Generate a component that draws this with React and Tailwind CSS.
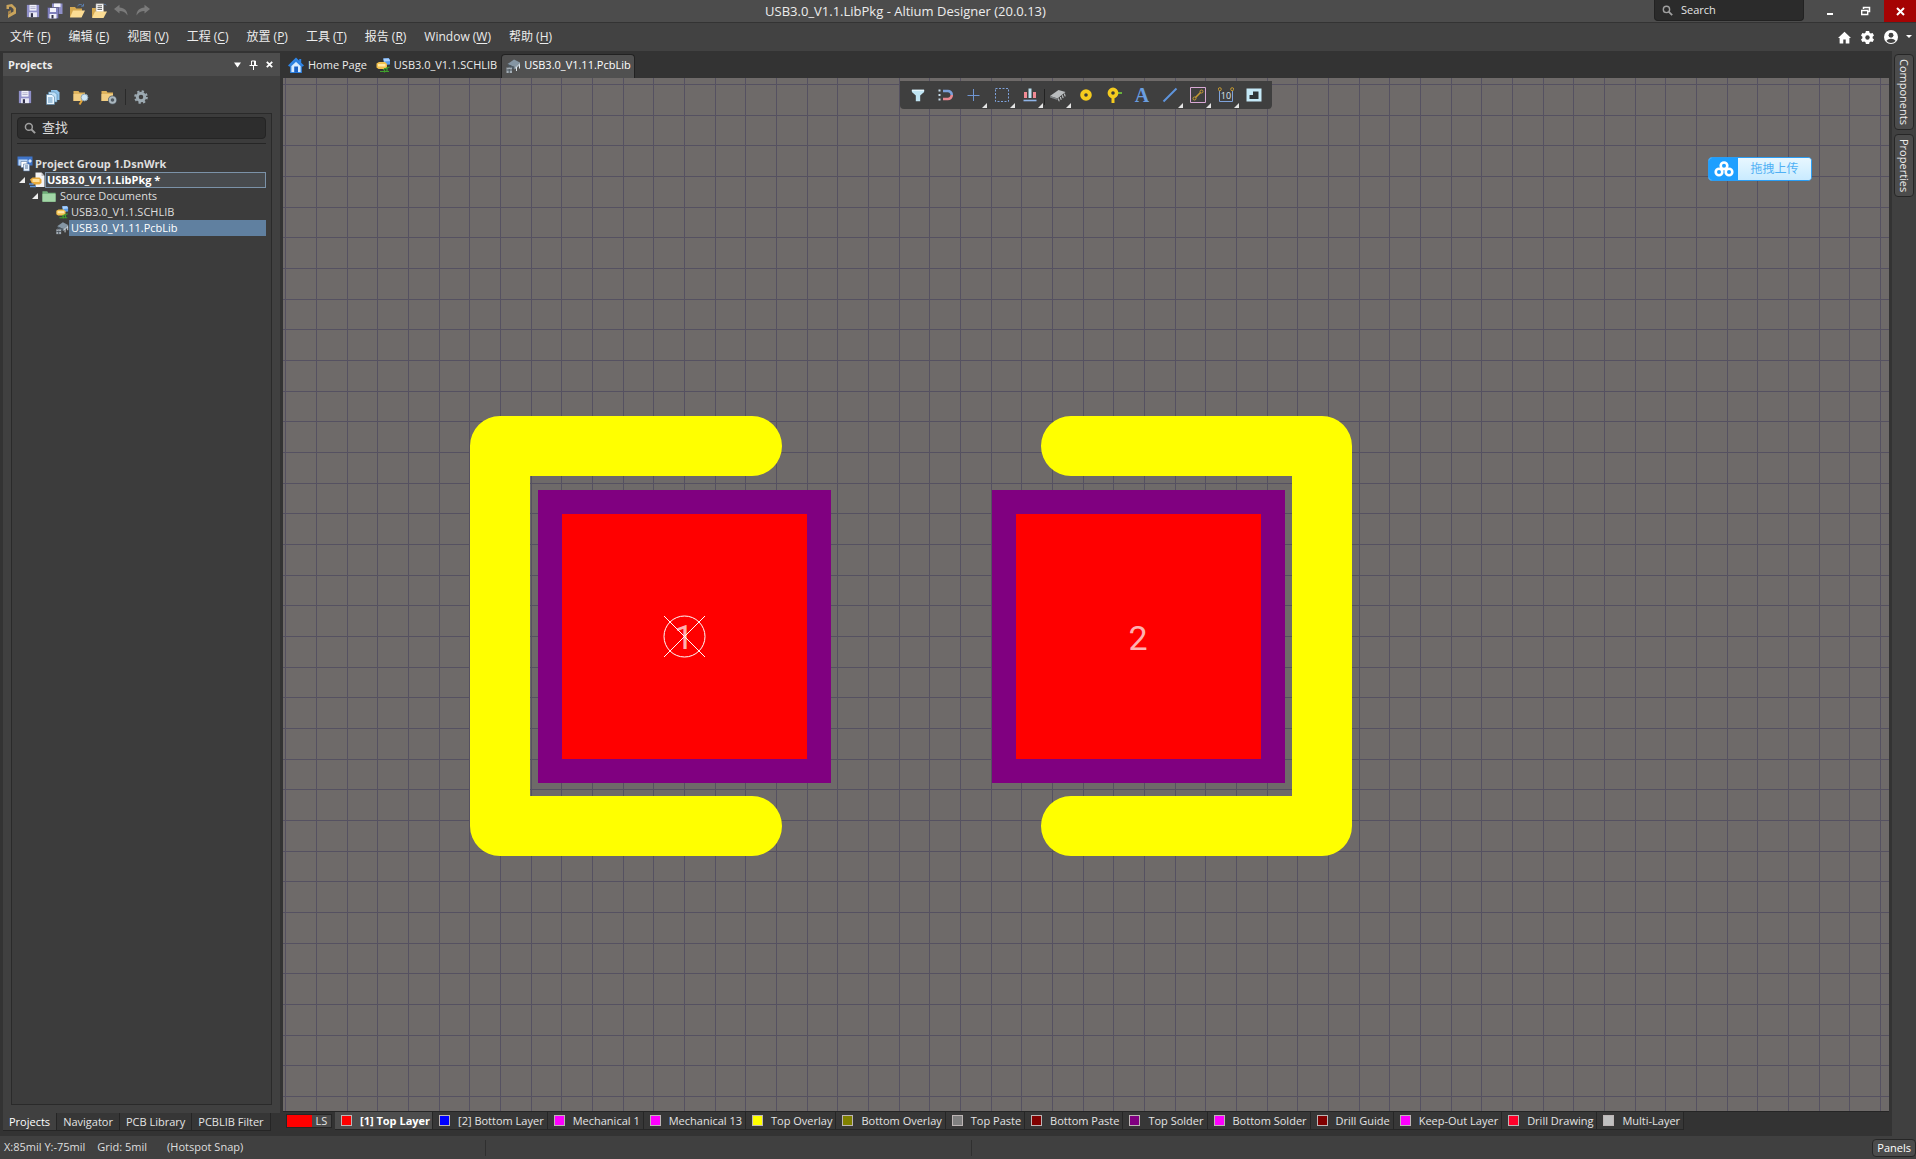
import React from "react";

const FONT = "font-['Open_Sans','Noto_Sans_CJK_SC',sans-serif]";

const Svg = ({ s = 16, children, className = "" }) => (
  <svg width={s} height={s} viewBox="0 0 16 16" fill="none" className={"shrink-0 " + className} aria-hidden="true">
    {children}
  </svg>
);

/* ---------- icons ---------- */
const Logo = () => (
  <Svg>
    <path d="M3.500 2 9 1 13 5v5.500L5 15v-3.500L10.500 8.500V6L8 3.800H6V6H3.500z" fill="#c9a45c" />
    <path d="M5 8.500 8 7v2.800L5 11.500Z" fill="#a8854a" />
  </Svg>
);
const Save = ({ s = 16 }) => (
  <Svg s={s}>
    <path d="M1 1h14v14H1z" fill="#8f8fc8" />
    <path d="M4 1h8v6.500H4z" fill="#f2f2fa" />
    <path d="M5 3.200h6M5 5.200h6" stroke="#a8a8c8" />
    <path d="M3.500 9.500h9V15h-9z" fill="#e9e9f5" />
    <path d="M5.500 10.500H8V15H5.500z" fill="#33334d" />
  </Svg>
);
const SaveAll = () => (
  <Svg>
    <path d="M5 .5h10.500V11H5z" fill="#8f8fc8" />
    <path d="M7 .5h6.500V4H7z" fill="#f2f2fa" />
    <path d="M.5 4.500h11v11H.5z" fill="#8080bd" stroke="#44445c" strokeWidth=".5" />
    <path d="M3 5h6v4H3zM2.500 11h7v4.500h-7z" fill="#f2f2fa" />
    <path d="M4.500 12h2v3.500h-2z" fill="#33334d" />
  </Svg>
);
const Open = () => (
  <Svg>
    <path d="M1 4h5l1.200 1.600H13V14H1z" fill="#d6a950" />
    <path d="M4 7.500h12L12.500 14.500H1z" fill="#fbdc94" />
    <path d="M8.500 3c1.500-2 4-2 5.200-.3M14.500.8v2.400h-2.400" stroke="#5b7fae" />
  </Svg>
);
const OpenDoc = () => (
  <Svg>
    <path d="M1 5h4l1 1.500h7V14H1z" fill="#d6a950" />
    <path d="M5 .8h7.500V9H5z" fill="#fff" stroke="#9a9a9a" strokeWidth=".6" />
    <path d="M6.500 2.800h4.500M6.500 4.600h4.500M6.500 6.400h4.500" stroke="#4d4d4d" strokeWidth=".9" />
    <path d="M4 8.500h12L12.500 15H1z" fill="#fbdc94" />
    <path d="M13 1.500c1-.4 1.800 0 2.200.8" stroke="#5b7fae" />
  </Svg>
);
const Undo = ({ flip }) => (
  <Svg className={flip ? "-scale-x-100" : ""}>
    <path d="M1 6 6.500 1.800V4.500C11.500 4.600 14.500 8 14.500 12.500 12.600 9.400 10 8 6.500 8v2.600Z" fill="#7a7a7a" />
  </Svg>
);
const Mag = ({ s = 13, c = "#a0a0a0" }) => (
  <Svg s={s}>
    <circle cx="6.500" cy="6.500" r="4.600" stroke={c} strokeWidth="2" />
    <path d="m10 10 4.800 4.800" stroke={c} strokeWidth="2.600" />
  </Svg>
);
const House = () => (
  <Svg>
    <path d="M8 .5 0 8.600l1.400 1.200L8 3.600l6.600 6.200L16 8.600 13.200 5.700V2h-2v1.700Z" fill="#2f86e8" />
    <path d="M2.800 8.800 8 4l5.200 4.800v6.700H2.800z" fill="#d9ecff" stroke="#2f86e8" strokeWidth="1.200" />
    <path d="M6.200 9.500h3.800v6H6.200z" fill="#1c62c4" />
  </Svg>
);
const SchLib = () => (
  <Svg>
    <path d="M8 1.500 13.500 1 15 3v4.500L9.500 8z" fill="#5a9be8" />
    <path d="M8.500 1.500h5.500L15 4l-6 .5z" fill="#a8d0ff" />
    <path d="M1.500 6.500 4 5h6l2 2v3.500L9 12H3.500l-2-1.500z" fill="#f2c14e" />
    <path d="M3 7h7.500v2.500H3z" fill="#ffe9a8" />
    <path d="M8 12.500 14.500 10M5 14.500h9M9.500 11v4.500M12 10.500V15" stroke="#3fa02c" strokeWidth="1.200" />
  </Svg>
);
const PcbLib = () => (
  <Svg>
    <path d="M2.500 6 9 1.500l6 3L9.500 9z" fill="#8596a4" />
    <path d="M2.500 6 9.500 9v2.500L5 9.800z" fill="#4f5d68" />
    <path d="m9.500 9 5.500-4.500v2.700L9.500 11.500z" fill="#a9b7c2" />
    <path d="M11.500 9v4M14.500 6.500v4" stroke="#dbe4ea" />
    <path d="M1.500 9.500H7V15H1.500z" fill="#a3adb5" />
    <path d="M2.800 9.500V8h3v1.500M4.200 11v4M1.500 12H7" stroke="#4a545c" />
  </Svg>
);
const Copies = () => (
  <Svg>
    <path d="M6 1h6l2.500 2.500V11H6z" fill="#8fc3ea" />
    <path d="M3.500 3h6L12 5.500V13H3.500z" fill="#bfe0f7" stroke="#4c7da3" strokeWidth=".6" />
    <path d="M1.500 5.500H7L9.500 8v7.500h-8z" fill="#eaf6ff" stroke="#4c7da3" strokeWidth=".6" />
    <path d="M3 9h4.500M3 11h4.500M3 13h4.500" stroke="#5c94bf" />
  </Svg>
);
const Gear = ({ s = 16, c = "#9daab2", hole = "#404040" }) => (
  <Svg s={s}>
    <circle cx="8" cy="8" r="6.600" stroke={c} strokeWidth="2.400" strokeDasharray="2.600 2.580" />
    <circle cx="8" cy="8" r="5.900" fill={c} />
    <circle cx="8" cy="8" r="2.600" fill={hole} />
  </Svg>
);
/* six-toothed gear for the menu bar */
const Cog = () => (
  <Svg s={13}>
    <path d="M6 0h4l.5 2.300 1.500.9 2.300-.8 1.700 3-1.700 1.700v1.800l1.700 1.700-1.700 3-2.300-.8-1.500.9L10 16H6l-.5-2.300-1.500-.9-2.300.8-1.700-3 1.700-1.700V7.100L0 5.400l1.700-3 2.300.8 1.500-.9z" fill="#fff" />
    <circle cx="8" cy="8" r="2.700" fill="#424242" />
  </Svg>
);
const FolderMag = () => (
  <Svg>
    <path d="M.5 2h5l1 1.500H12V12H.5z" fill="#dfb35c" />
    <path d="M.5 5H12v7H.5z" fill="#f1cd82" />
    <path d="m9 11.500-2.500 4" stroke="#e0a338" strokeWidth="2" />
    <circle cx="11.500" cy="8.500" r="3.400" fill="#cfe6f5" stroke="#8ea4b2" />
  </Svg>
);
const FolderGear = () => (
  <Svg>
    <path d="M.5 2h5l1 1.500H12V12H.5z" fill="#dfb35c" />
    <path d="M.5 5H12v7H.5z" fill="#f1cd82" />
    <circle cx="11.500" cy="11" r="3" stroke="#4f5961" strokeWidth="3" fill="#4f5961" />
    <circle cx="11.500" cy="11" r="2.800" stroke="#aab6be" strokeWidth="2" />
  </Svg>
);
const Folder = () => (
  <Svg s={14}>
    <path d="M.5 2.500H6l1 1.800h8.500v10.200H.5z" fill="#6fae78" />
    <path d="M.5 5.500h15v9H.5z" fill="#a2d6a6" />
  </Svg>
);
const Group = () => (
  <Svg>
    <path d="M.5.5h15v9H.5z" fill="#3f74c8" />
    <path d="M1.500 3.500h9v6h-9z" fill="#bcd6f5" />
    <path d="M4 5.500h6v6H4z" fill="#fff" stroke="#55749d" strokeWidth=".6" />
    <path d="M6.500 8h6v7h-6z" fill="#e8f2fc" stroke="#55749d" strokeWidth=".6" />
    <path d="M8 10h3M8 12h3" stroke="#55749d" />
    <path d="m11 5 2-2 2 2-2 2z" fill="#d8e8fa" />
  </Svg>
);
const LibPkg = () => (
  <Svg>
    <path d="M6.500.5h6l3 3.500v11h-9z" fill="#f4f4f4" />
    <path d="M12.500.5V4h3z" fill="#bdbdbd" />
    <path d="M1 7.500 3.500 5.500h7l2 2V11l-2 1.500h-7z" fill="#e9ab3c" />
    <path d="M3.500 7h7v3h-7z" fill="#ffdf96" />
    <path d="M0 12h4.500M1 14.500h6" stroke="#5d93d6" strokeWidth="1.500" />
  </Svg>
);

const TB = {
  filter: (
    <Svg s={14}><path d="M1 2h14v2.500L10.500 8.500V15h-5V8.500L1 4.500z" fill="#bfe3f2" /><path d="M1 2h14v1.500H1z" fill="#e4f5fc" /></Svg>
  ),
  magnet: (
    <Svg>
      <path d="M5 4h4.500a4 4 0 0 1 4.300 4" stroke="#7c9fd8" strokeWidth="2.600" />
      <path d="M5 12h4.500a4 4 0 0 0 4.300-4" stroke="#e88790" strokeWidth="2.600" />
      <path d="M.5 3.500h2M.5 8h2M.5 12.500h2" stroke="#c6dcea" strokeWidth="2" />
    </Svg>
  ),
  cross: (<Svg><path d="M7.500 2v12M1.500 8.500h12" stroke="#6f95d2" /></Svg>),
  select: (<Svg><path d="M1.500 1.500h13v13h-13z" stroke="#7fa3dc" strokeDasharray="2 1.500" /></Svg>),
  align: (
    <Svg>
      <path d="M3.500 5v6M12.500 5v6" stroke="#f08a94" strokeWidth="3" />
      <path d="M8 1.500V11" stroke="#bfe3f2" strokeWidth="3" />
      <path d="M1.500 13.500h13" stroke="#8fb4e8" strokeWidth="1.600" />
    </Svg>
  ),
  chip: (
    <Svg>
      <path d="M0 9 8.500 3 15.500 5 7.500 11.500z" fill="#b9bcbe" />
      <path d="M0 9v1.500L7.500 13v-1.500z" fill="#7f8386" />
      <path d="m8.500 11.500.6 2.800M10.500 10l.6 2.800M12.500 8.300l.6 2.800M14.500 6.600l.6 2.800" stroke="#d2d6d8" />
    </Svg>
  ),
  pad: (<Svg><circle cx="8" cy="8" r="3.800" stroke="#f4cb1e" strokeWidth="4" fill="#3a3a3a" /></Svg>),
  via: (
    <Svg>
      <path d="M10 6h6" stroke="#69b33c" strokeWidth="2" />
      <path d="M7 8v8" stroke="#f4cb1e" strokeWidth="3" />
      <circle cx="7" cy="6" r="3.600" stroke="#f4cb1e" strokeWidth="3.600" fill="#3a3a3a" />
    </Svg>
  ),
  line: (<Svg><path d="M1.500 14.500 14.500 1.500" stroke="#5f95dd" strokeWidth="2" /></Svg>),
  route: (
    <Svg>
      <path d="M.5.5h15v15H.5z" stroke="#d9a9d6" />
      <path d="m5.500 10.500 5-5" stroke="#c79b32" strokeWidth="1.600" />
      <circle cx="4.500" cy="11.500" r="1.500" stroke="#c79b32" /><circle cx="11.500" cy="4.500" r="1.500" stroke="#c79b32" />
    </Svg>
  ),
  dim: (
    <Svg>
      <path d="M1.500 4v10.500h13V4" stroke="#7fa3dc" />
      <circle cx="1.800" cy="2.200" r="1.500" stroke="#c79b32" /><circle cx="14.200" cy="2.200" r="1.500" stroke="#c79b32" />
      <text x="8" y="12" fontSize="9" textAnchor="middle" fill="#dce6ee">10</text>
    </Svg>
  ),
  poly: (<Svg><path d="M.5 1.500h15v13H.5z" fill="#c5e9f7" /><path d="M7 4.500h5.500v7.500h-9V8H7z" fill="#2e3438" /></Svg>),
};

const Corner = () => (
  <svg width="5" height="5" className="absolute right-px bottom-px" aria-hidden="true"><path d="M5 0v5H0z" fill="#e4e4e4" /></svg>
);

const tools = [
  ["Filter", TB.filter], ["Snapping", TB.magnet], ["Move", TB.cross, 1], ["Select", TB.select, 1], ["Align", TB.align, 1, 1],
  ["Component", TB.chip, 1], ["Pad", TB.pad], ["Via", TB.via],
  ["Text", <span className="font-['Liberation_Serif',serif] text-xl leading-4 font-bold text-[#6a9ee0]">A</span>],
  ["Line", TB.line, 1], ["Route", TB.route, 1], ["Dimension", TB.dim, 1], ["Region", TB.poly],
];

/* ---------- title and menu ---------- */
function TitleBar() {
  return (
    <header className="flex h-[22px] shrink-0 items-center bg-[#4c4c4c]">
      <div className="flex items-center gap-1.5 pr-1.5 pl-[3px]">
        <Logo />
        {[["Save", <Save s={14} />], ["Save All", <SaveAll />], ["Open", <Open />], ["Open Document", <OpenDoc />], ["Undo", <Undo />], ["Redo", <Undo flip />]].map(([n, i]) => (
          <button key={n} aria-label={n} className="flex h-4 w-4 items-center justify-center">{i}</button>
        ))}
      </div>
      <h1 className="flex-1 text-center text-[13px] leading-5 text-[#ececec]">USB3.0_V1.1.LibPkg - Altium Designer (20.0.13)</h1>
      <div className="flex h-full justify-end">
        <label className="mr-2 flex h-[21px] w-[150px] items-center gap-2 rounded-b border border-t-0 border-[#222] bg-[#2b2b2b] px-[7px]">
          <Mag s={11} />
          <input aria-label="Search" placeholder="Search" className="w-full bg-transparent text-[11px] leading-4 text-white outline-none placeholder:text-[#e4e4e4]" />
        </label>
        <button aria-label="Minimize" className="flex w-9 items-center justify-center"><span className="mt-1.5 h-0.5 w-1.5 bg-white" /></button>
        <button aria-label="Restore" className="flex w-9 items-center justify-center">
          <svg width="10" height="10" fill="none" stroke="#fff"><path d="M2.500 3V1.500h6v4H7" strokeWidth="1.500" /><path d="M.7 4.500h6v4h-6z" strokeWidth="1.400" /></svg>
        </button>
        <button aria-label="Close" className="flex w-8 items-center justify-center bg-[#a50303]">
          <svg width="9" height="9" stroke="#fff" strokeWidth="2"><path d="m1 1 7 7M8 1 1 8" /></svg>
        </button>
      </div>
    </header>
  );
}

const menus = [["文件", "F"], ["编辑", "E"], ["视图", "V"], ["工程", "C"], ["放置", "P"], ["工具", "T"], ["报告", "R"], ["Window", "W"], ["帮助", "H"]];

function MenuBar() {
  return (
    <nav className="flex h-[29px] shrink-0 items-center justify-between border-t border-[#333] bg-[#424242] pr-1 pl-2.5">
      <div className="flex gap-[18px]">
        {menus.map(([t, k]) => (
          <button key={t} className="text-xs whitespace-nowrap text-[#ececec]">{t} (<u className="underline-offset-2">{k}</u>)</button>
        ))}
      </div>
      <div className="flex items-center gap-2.5">
        <button aria-label="Home"><Svg s={13}><path d="M8 1 0 8.500h2V15.500h4.500v-5h3v5H14V8.500h2z" fill="#fff" /></Svg></button>
        <button aria-label="Settings"><Cog /></button>
        <button aria-label="Account" className="flex items-center gap-2">
          <Svg s={14}><circle cx="8" cy="8" r="8" fill="#fff" /><circle cx="8" cy="6" r="2.800" fill="#424242" /><path d="M2.800 12.500c2-3.500 8.400-3.500 10.400 0A7 7 0 0 1 2.800 12.500" fill="#424242" /></Svg>
          <svg width="6" height="4"><path d="M0 0h6L3 3z" fill="#fff" /></svg>
        </button>
      </div>
    </nav>
  );
}

/* ---------- projects panel ---------- */
const Arrow = () => (<svg width="6" height="6" className="shrink-0" aria-hidden="true"><path d="M6 0v6H0z" fill="#eee" /></svg>);

function ProjectsPanel() {
  return (
    <aside className="flex w-[283px] shrink-0 flex-col bg-[#333] px-[3px] pt-0.5 pb-[5px]">
      <div className="flex h-[23px] shrink-0 items-center justify-between bg-[#4d4d4d] pr-[7px] pl-[5px]">
        <h2 className="text-[11px] leading-4 font-bold text-[#ececec]">Projects</h2>
        <div className="flex items-center gap-2">
          <button aria-label="Panel menu"><svg width="7" height="6"><path d="M0 .5h7L3.500 5.500z" fill="#fff" /></svg></button>
          <button aria-label="Pin"><svg width="9" height="10" fill="none" stroke="#fff"><path d="M2.500 1h4v4.500h-4zM.5 5.500h8M4.500 5.500V10M5.500 1v4.500" /></svg></button>
          <button aria-label="Close panel"><svg width="7" height="7" stroke="#fff" strokeWidth="1.800"><path d="m.8.8 5.400 5.400M6.200.8.8 6.200" /></svg></button>
        </div>
      </div>
      <div className="flex min-h-0 flex-1 flex-col bg-[#404040] px-2 pt-[13px] pb-2">
        <div className="flex items-center gap-3 pb-2 pl-1.5">
          {[["Save", <Save s={14} />], ["Compile", <Copies />], ["Explore", <FolderMag />], ["Project options", <FolderGear />]].map(([n, i]) => (
            <button key={n} aria-label={n} className="flex h-4 w-4 items-center justify-center">{i}</button>
          ))}
          <span className="-ml-1 h-4 w-px bg-[#2a2a2a]" />
          <button aria-label="Settings" className="-ml-1"><Gear s={14} /></button>
        </div>
        <div className="flex flex-1 flex-col border border-[#2a2a2a] bg-[#3c3c3c] px-[5px] pt-[3px]">
          <label className="flex h-[22px] items-center gap-1.5 rounded border border-[#242424] bg-[#2d2d2d] px-1.5">
            <Mag s={12} />
            <input aria-label="查找" placeholder="查找" className="h-5 w-full bg-transparent pb-0.5 text-[13px] leading-4 text-white outline-none placeholder:text-[#dcdcdc]" />
          </label>
          <hr className="mt-1 mb-3 border-[#262626]" />
          <ul className="text-[11px] leading-4 text-[#dedede]">
            <li className="flex h-4 items-center gap-0.5 font-bold"><Group />Project Group 1.DsnWrk</li>
            <li className="flex h-4 items-center pl-0.5 font-bold text-white">
              <Arrow /><span className="w-1" /><LibPkg /><span className="flex-1 border border-[#7b92a8] bg-[#484b4e] pl-px leading-[14px]">USB3.0_V1.1.LibPkg *</span>
            </li>
            <li className="flex h-4 items-center gap-1 pl-[15px]"><Arrow /><Folder />Source Documents</li>
            <li className="flex h-4 items-center gap-0.5 pl-[38px]"><Svg s={14}><SchLib /></Svg>USB3.0_V1.1.SCHLIB</li>
            <li className="flex h-4 items-center pl-[38px]"><Svg s={14}><PcbLib /></Svg><span className="flex-1 bg-[#6080a0] pl-0.5 text-white">USB3.0_V1.11.PcbLib</span></li>
          </ul>
        </div>
      </div>
      <div className="flex h-[18px] shrink-0 text-[11px] text-[#e4e4e4]">
        {["Projects", "Navigator", "PCB Library", "PCBLIB Filter"].map((t, i) => (
          <button key={t} className={i ? "border-r border-b border-[#252525] bg-[#363636] px-1.5 leading-4 whitespace-nowrap" : "border-r border-b border-[#252525] bg-[#404040] px-1.5 leading-4 text-white"}>{t}</button>
        ))}
      </div>
    </aside>
  );
}

/* ---------- board canvas ---------- */
const PITCH = 30.667;
const OX = 401;
const OY = 558;
const cols = Array.from({ length: 140 }, (_, i) => Math.round(OX + (i - 13) * PITCH));
const rows = Array.from({ length: 80 }, (_, i) => Math.round(OY + (i - 18) * PITCH));

function Board() {
  return (
    <div className="relative min-h-0 flex-1 overflow-hidden bg-[#6e6a69]">
      <svg className="absolute inset-0 h-full w-full" role="img" aria-label="Footprint with pads 1 and 2">
        <g fill="#555161" shapeRendering="crispEdges">
          {cols.map((x) => <rect key={x} x={x} y="0" width="1" height="100%" />)}
          {rows.map((y) => <rect key={y} x="0" y={y} width="100%" height="1" />)}
        </g>
        <g fill="none" stroke="#ffff00" strokeWidth="60" strokeLinecap="round" strokeLinejoin="round">
          <path d="M469 368H217V748H469" />
          <path d="M788 368H1039V748H788" />
        </g>
        <g fill="#800080"><rect x="255" y="412" width="293" height="293" /><rect x="709" y="412" width="293" height="293" /></g>
        <g fill="#ff0000"><rect x="279" y="436" width="245" height="245" /><rect x="733" y="436" width="245" height="245" /></g>
        <g fill="#ffb0b0" fontSize="34" textAnchor="middle" fontFamily="Roboto, sans-serif">
          <text x="401" y="571">1</text>
          <text x="855" y="572">2</text>
        </g>
        <g fill="none" stroke="#fff"><circle cx="401.500" cy="558.500" r="20.500" /><path d="m381 538 41 41M422 538l-41 41" /></g>
      </svg>
      <div className="absolute top-[3px] left-1/2 flex h-7 -translate-x-1/2 rounded-b bg-[#3f3f3f] px-1">
        {tools.map(([n, icon, more, sep]) => (
          <button key={n} aria-label={n} className="relative flex w-7 items-center justify-center">
            {icon}{more && <Corner />}{sep && <span className="absolute top-2 -right-px h-4 w-px bg-[#222]" />}
          </button>
        ))}
      </div>
      <button className="absolute top-[79px] right-[77px] flex h-6 w-[104px] overflow-hidden rounded border border-[#2a9df4] bg-[#dff3ff] text-xs text-[#4fb0f5]">
        <span className="flex h-full w-[29px] items-center justify-center bg-[#1e9fff]">
          <svg width="20" height="16" fill="none" stroke="#fff" strokeWidth="2.600"><circle cx="10" cy="4.800" r="3.300" /><circle cx="5" cy="11" r="3.300" /><circle cx="15" cy="11" r="3.300" /></svg>
        </span>
        <span className="flex h-full flex-1 items-center justify-center bg-linear-to-b from-[#e8f7ff] to-[#c9ebff]">拖拽上传</span>
      </button>
    </div>
  );
}

const layers = [
  ["[1] Top Layer", "bg-[#ff0000]"], ["[2] Bottom Layer", "bg-[#0000ff]"], ["Mechanical 1", "bg-[#ff00ff]"], ["Mechanical 13", "bg-[#ff00ff]"],
  ["Top Overlay", "bg-[#ffff00]"], ["Bottom Overlay", "bg-[#808000]"], ["Top Paste", "bg-[#808080]"], ["Bottom Paste", "bg-[#800000]"],
  ["Top Solder", "bg-[#800080]"], ["Bottom Solder", "bg-[#ff00ff]"], ["Drill Guide", "bg-[#800000]"], ["Keep-Out Layer", "bg-[#ff00ff]"],
  ["Drill Drawing", "bg-[#ff002a]"], ["Multi-Layer", "bg-[#c0c0c0]"],
];

function LayerBar() {
  return (
    <div className="flex h-[25px] shrink-0 items-start overflow-hidden border-t border-[#252525] pl-[3px] text-[11px] text-[#e4e4e4]">
      <button className="mt-0.5 mr-[3px] flex h-3.5 w-[46px] border border-[#262626] bg-[#4a4a4a] leading-3"><span className="h-full w-[25px] bg-[#ff0000]" /><span className="flex-1 text-center">LS</span></button>
      {layers.map(([t, c], i) => (
        <button key={t} className={"flex h-[18px] shrink-0 items-center gap-2 border-r border-b border-[#262626] pl-1.5 leading-4 whitespace-nowrap " + (i ? "bg-[#373737] pr-[3px]" : "bg-[#4d4d4d] pr-0.5 font-bold text-white")}>
          <span className={"h-[11px] w-[11px] border border-[#bdb5b5] " + c} />{t}
        </button>
      ))}
    </div>
  );
}

export default function App() {
  return (
    <div className={"flex h-screen flex-col overflow-hidden bg-[#333] " + FONT}>
      <TitleBar />
      <MenuBar />
      <main className="flex min-h-0 flex-1">
        <ProjectsPanel />
        <section className="flex min-w-0 flex-1 flex-col">
          <div className="flex h-[27px] shrink-0 items-end gap-1 pl-[5px] text-[11px] text-[#ececec]">
            <button className="mb-px flex h-6 items-center gap-1 pr-1"><House />Home Page</button>
            <button className="mb-px flex h-6 items-center gap-[3px]"><SchLib />USB3.0_V1.1.SCHLIB</button>
            <button className="flex h-6 items-center gap-[3px] rounded-t border border-b-0 border-[#222] bg-[#505050] px-[3px] pb-0.5 text-white"><PcbLib />USB3.0_V1.11.PcbLib</button>
          </div>
          <Board />
          <LayerBar />
        </section>
        <aside className="ml-[3px] flex w-6 shrink-0 flex-col items-center gap-1 bg-[#404040] pt-[3px] text-[11px] text-[#ececec]">
          {["Components", "Properties"].map((t) => (
            <button key={t} className="rounded border border-[#262626] bg-[#4c4c4c] pt-1 pr-px pb-1 pl-px leading-4 [writing-mode:vertical-rl]">{t}</button>
          ))}
        </aside>
      </main>
      <footer className="grid h-[23px] shrink-0 grid-cols-[486px_486px_1fr] items-center bg-[#404040] text-[11px] text-[#dedede]">
        <div className="flex h-4 items-center gap-3 border-r border-[#2f2f2f] pl-1">
          <span>X:85mil Y:-75mil</span><span>Grid: 5mil</span><span className="pl-2">(Hotspot Snap)</span>
        </div>
        <div className="h-4 border-r border-[#2f2f2f]" />
        <div className="flex justify-end"><button className="rounded border border-[#262626] bg-[#4c4c4c] px-1 leading-4 text-white">Panels</button></div>
      </footer>
    </div>
  );
}
